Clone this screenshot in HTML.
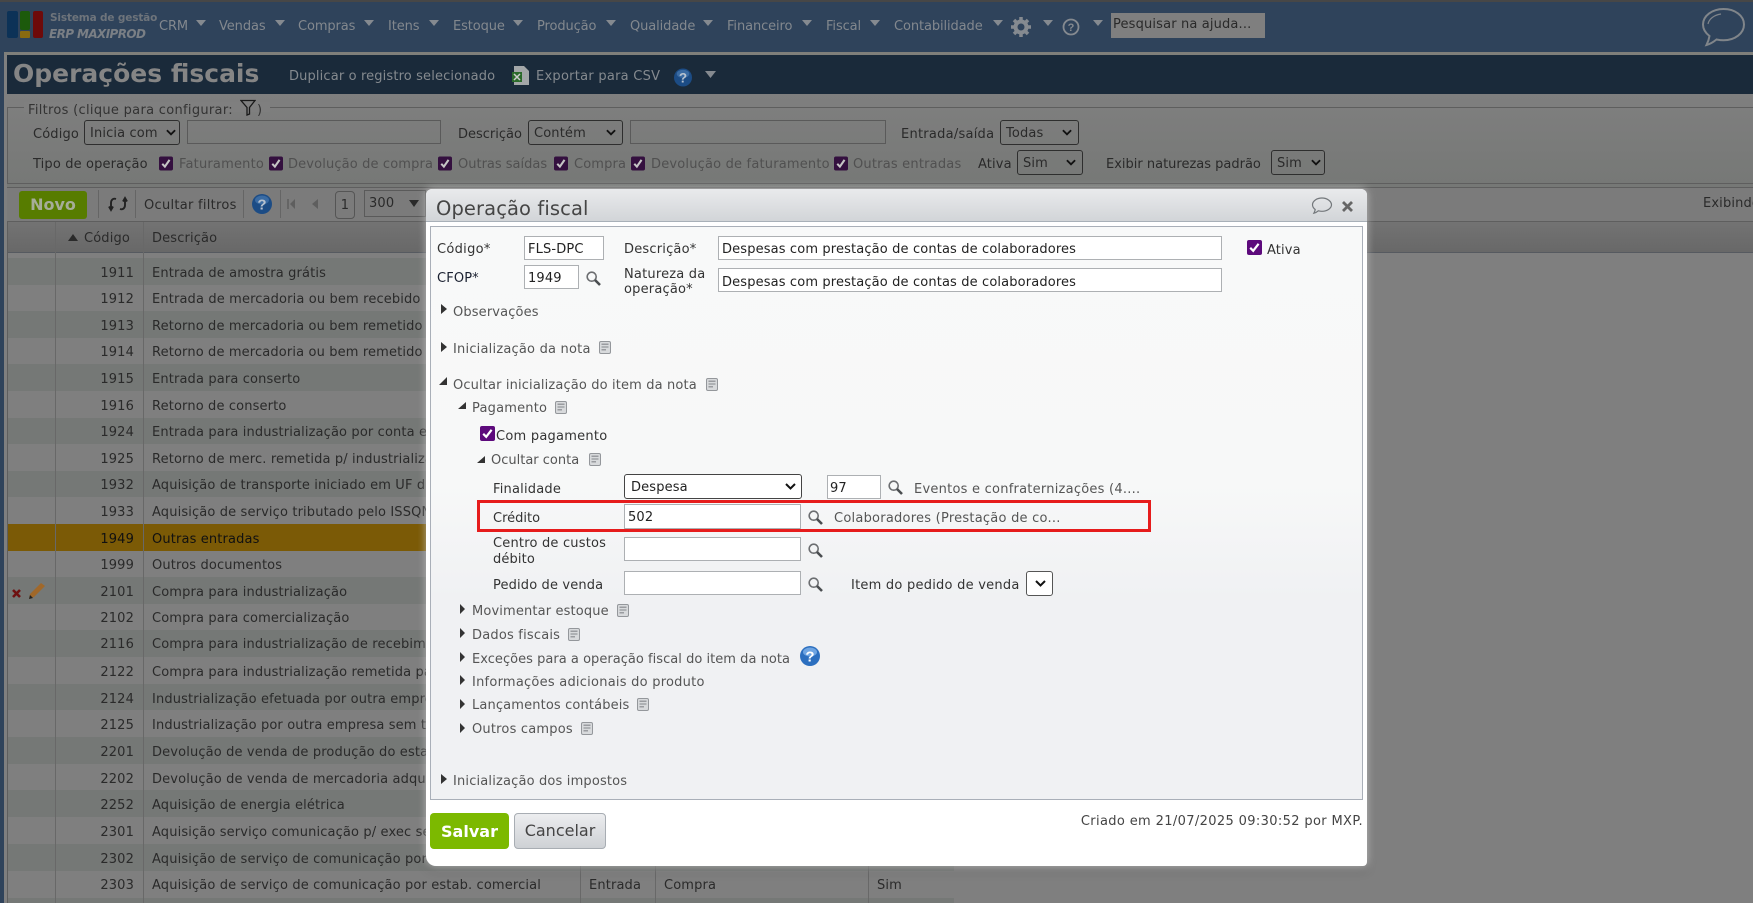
<!DOCTYPE html>
<html lang="pt-BR"><head><meta charset="utf-8"><title>Operações fiscais</title>
<style>
html,body{margin:0;padding:0;width:1753px;height:903px;overflow:hidden;background:#7f7f7f}
body{position:relative;font-family:"DejaVu Sans","Liberation Sans",sans-serif;font-size:13px;color:#2a2a2a;letter-spacing:.14px}
div,span,svg{position:absolute;box-sizing:border-box}
.t{white-space:nowrap;line-height:16px;margin-top:2px}
.m{color:#83888e;letter-spacing:-.1px;margin-top:1px}
.d{color:#555}
.g{color:#505050}
.r{height:27px;left:8px;width:946px}
.a{background:#757876}.b{background:#7f7f7f}
.n{width:54px;text-align:right;line-height:16px;margin-top:2px}
.x{line-height:16px;white-space:nowrap;margin-top:2px}
.sel{border:1px solid #2e2e2e;border-radius:3px;line-height:16px;padding:5px 0 0 5px;white-space:nowrap}
.inp{border:1px solid #5a5a5a}
.fi{background:#fff;border:1px solid #adb0b3;line-height:16px;padding:5px 0 0 3px;color:#222;white-space:nowrap}
</style></head><body>
<svg width="0" height="0" style="position:absolute">
<defs>
<symbol id="mag" viewBox="0 0 15 15"><circle cx="5.700" cy="5.700" r="4.500" fill="none" stroke="#6c6e71" stroke-width="1.600"/><path d="M9 9l5 5" stroke="#4a4d50" stroke-width="2.600"/></symbol>
<symbol id="note" viewBox="0 0 12 13"><rect x=".5" y=".5" width="11" height="12" rx="1.500" fill="#d8dadc" stroke="#94979b"/><path d="M2.500 3.200h7M2.500 6h7M2.500 8.800h4.500" stroke="#85888c" stroke-width="1.100"/></symbol>
<symbol id="cb" viewBox="0 0 15 15"><rect width="15" height="15" rx="2" fill="#5d0a7c"/><path d="M3.200 7.800l3 3 5.400-7" fill="none" stroke="#fff" stroke-width="2.200"/></symbol>
<symbol id="cbd" viewBox="0 0 15 15"><rect width="15" height="15" rx="2" fill="#34103f"/><path d="M3.500 7.800l2.800 3 5-7.200" fill="none" stroke="#c5c5c5" stroke-width="2.200"/></symbol>
<symbol id="chev" viewBox="0 0 11 7"><path d="M1 1l4.500 4.500L10 1" fill="none" stroke="#111" stroke-width="2"/></symbol>
<symbol id="help" viewBox="0 0 20 20"><circle cx="10" cy="10" r="10" fill="#2c6fbf"/><ellipse cx="10" cy="6" rx="7" ry="4.500" fill="#6fa5e2"/><text x="10" y="15.500" text-anchor="middle" font-family="Liberation Sans" font-weight="700" font-size="15" fill="#fff">?</text></symbol>
<symbol id="helpd" viewBox="0 0 20 20"><circle cx="10" cy="10" r="10" fill="#1c4c85"/><ellipse cx="10" cy="6" rx="7" ry="4.500" fill="#3a6ba3"/><text x="10" y="15.500" text-anchor="middle" font-family="Liberation Sans" font-weight="700" font-size="15" fill="#b7c2cf">?</text></symbol>
</defs></svg>

<!-- top bar -->
<div style="left:0;top:0;width:1753px;height:2px;background:#474747"></div>
<div style="left:0;top:2px;width:1753px;height:50px;background:#2f435b"></div>
<div style="left:0;top:52px;width:1753px;height:3px;background:#7f7f7a"></div>
<div style="left:0;top:52px;width:4px;height:851px;background:#2f435b"></div>
<div style="left:4px;top:55px;width:3px;height:848px;background:#7f7f7f"></div>

<div style="left:7px;top:11px;width:11px;height:27px;background:#0c3257;border-radius:2px"></div>
<div style="left:20px;top:11px;width:10px;height:19px;background:#1c5a0c;border-radius:2px"></div>
<div style="left:20px;top:31px;width:10px;height:7px;background:#8a6a10;border-radius:1px"></div>
<div style="left:33px;top:11px;width:10px;height:27px;background:#6e0a0a;border-radius:2px"></div>
<div class="t" style="left:50px;top:8px;font-size:10.500px;font-weight:700;color:#6e747b;letter-spacing:-.15px">Sistema de gestão</div>
<div class="t" style="left:49px;top:23px;margin-top:3px;font-size:12px;font-weight:700;font-style:italic;color:#7a7f85;letter-spacing:-.6px">ERP MAXIPROD</div>

<div class="t m" style="left:159px;top:18px">CRM</div>
<div class="t m" style="left:219px;top:18px">Vendas</div>
<div class="t m" style="left:298px;top:18px">Compras</div>
<div class="t m" style="left:388px;top:18px">Itens</div>
<div class="t m" style="left:453px;top:18px">Estoque</div>
<div class="t m" style="left:537px;top:18px">Produção</div>
<div class="t m" style="left:630px;top:18px">Qualidade</div>
<div class="t m" style="left:727px;top:18px">Financeiro</div>
<div class="t m" style="left:826px;top:18px">Fiscal</div>
<div class="t m" style="left:894px;top:18px">Contabilidade</div>
<svg style="left:0;top:0" width="1753" height="55"><g fill="#858a90">
<path d="M196 20h10l-5 6zM275 20h10l-5 6zM364 20h10l-5 6zM429 20h10l-5 6zM513 20h10l-5 6zM606 20h10l-5 6zM703 20h10l-5 6zM802 20h10l-5 6zM870 20h10l-5 6zM993 20h10l-5 6zM1043 20h10l-5 6zM1093 20h10l-5 6z"/></g>
<g stroke="#858a90" fill="none"><circle cx="1021" cy="27" r="5.500" stroke-width="4"/><path d="M1021 17v5M1021 32v5M1011 27h5M1026 27h5M1014 20l3.500 3.500M1024.500 30.500l3.500 3.500M1028 20l-3.500 3.500M1017.500 30.500l-3.500 3.500" stroke-width="3.500"/>
<circle cx="1071" cy="27" r="7.500" stroke-width="1.800"/></g>
<text x="1071" y="31" text-anchor="middle" font-family="Liberation Sans" font-size="11" font-weight="700" fill="#858a90">?</text>
<path d="M1723.500 9c-11.500 0-20.500 7-20.500 15.500 0 4.500 2.500 8.500 6.500 11.500-.5 3-1.500 6-3 9 4-1 7.500-3.500 10-5.500 2.500.5 4.500.8 7 .8 11.500 0 20.500-7 20.500-15.800S1735 9 1723.500 9z" fill="none" stroke="#80858a" stroke-width="2"/>
<path d="M1708 24c1-5 6-9 13-10" fill="none" stroke="#80858a" stroke-width="1.200"/></svg>
<div class="t" style="left:1111px;top:13px;margin-top:0;width:154px;height:25px;background:#7f7f7f;color:#2a2a2a;padding:4px 0 0 2px;font-size:13px;letter-spacing:.15px">Pesquisar na ajuda...</div>

<!-- header -->
<div style="left:7px;top:55px;width:1746px;height:39px;background:#1a2a3a"></div>
<div class="t" style="left:13px;top:60px;margin-top:0;font-size:25px;line-height:28px;font-weight:700;color:#858585;letter-spacing:0">Operações fiscais</div>
<div class="t" style="left:289px;top:68px;margin-top:1px;color:#858a8f">Duplicar o registro selecionado</div>
<svg style="left:511px;top:65px" width="20" height="21"><path d="M3 1h10l5 5v14H3z" fill="#a3a7a8"/><rect x="1" y="7" width="10" height="10" fill="#2b6a2b"/><path d="M3 9l6 6M9 9l-6 6" stroke="#ccc" stroke-width="1.500"/></svg>
<div class="t" style="left:536px;top:68px;margin-top:1px;color:#858a8f;letter-spacing:.26px">Exportar para CSV</div>
<svg style="left:674px;top:68px" width="18" height="19"><use href="#helpd"/></svg>
<svg style="left:705px;top:71px" width="12" height="8"><path d="M0 0h11l-5.500 7z" fill="#858a90"/></svg>

<!-- filters -->
<div style="left:7px;top:94px;width:1746px;height:93px;background:linear-gradient(#7f7f7f,#767876)"></div>
<div style="left:7px;top:107px;width:1746px;height:77px;border:1px solid #5e5e5e;border-right:0"></div>
<div style="left:24px;top:102px;height:10px;width:246px;background:#7f7f7f"></div>
<div class="t" style="left:28px;top:101px;color:#333;letter-spacing:.3px">Filtros (clique para configurar:</div>
<svg style="left:240px;top:99px" width="16" height="17"><path d="M1 1.500h14L9.500 8.500v6.500L7 16V8.500z" fill="none" stroke="#1a1a1a" stroke-width="1.300"/></svg>
<div class="t" style="left:257px;top:101px;color:#333">)</div>

<div class="t" style="left:33px;top:125px">Código</div>
<div class="sel" style="left:84px;top:120px;width:96px;height:25px">Inicia com<svg style="right:3px;top:8px" width="10" height="7"><use href="#chev"/></svg></div>
<div class="inp" style="left:187px;top:120px;width:254px;height:24px"></div>
<div class="t" style="left:458px;top:125px;letter-spacing:0">Descrição</div>
<div class="sel" style="left:528px;top:120px;width:95px;height:25px">Contém<svg style="right:6px;top:8px" width="10" height="7"><use href="#chev"/></svg></div>
<div class="inp" style="left:630px;top:120px;width:256px;height:24px"></div>
<div class="t" style="left:901px;top:125px;letter-spacing:.25px">Entrada/saída</div>
<div class="sel" style="left:1000px;top:120px;width:79px;height:25px">Todas<svg style="right:6px;top:8px" width="10" height="7"><use href="#chev"/></svg></div>

<div class="t" style="left:33px;top:155px">Tipo de operação</div>
<svg style="left:159px;top:156px" width="14" height="15"><use href="#cbd"/></svg><div class="t g" style="left:179px;top:155px;letter-spacing:.2px">Faturamento</div>
<svg style="left:269px;top:156px" width="14" height="15"><use href="#cbd"/></svg><div class="t g" style="left:288px;top:155px">Devolução de compra</div>
<svg style="left:438px;top:156px" width="14" height="15"><use href="#cbd"/></svg><div class="t g" style="left:458px;top:155px;letter-spacing:0">Outras saídas</div>
<svg style="left:554px;top:156px" width="14" height="15"><use href="#cbd"/></svg><div class="t g" style="left:574px;top:155px">Compra</div>
<svg style="left:631px;top:156px" width="14" height="15"><use href="#cbd"/></svg><div class="t g" style="left:651px;top:155px;letter-spacing:.19px">Devolução de faturamento</div>
<svg style="left:834px;top:156px" width="14" height="15"><use href="#cbd"/></svg><div class="t g" style="left:853px;top:155px;letter-spacing:.2px">Outras entradas</div>
<div class="t" style="left:978px;top:155px">Ativa</div>
<div class="sel" style="left:1017px;top:150px;width:66px;height:25px">Sim<svg style="right:6px;top:8px" width="10" height="7"><use href="#chev"/></svg></div>
<div class="t" style="left:1106px;top:155px;letter-spacing:0">Exibir naturezas padrão</div>
<div class="sel" style="left:1271px;top:150px;width:54px;height:25px">Sim<svg style="right:3px;top:8px" width="10" height="7"><use href="#chev"/></svg></div>

<!-- toolbar -->
<div style="left:7px;top:187px;width:1746px;height:35px;background:#7b7b7b;border-top:1px solid #5e5e5e;border-bottom:1px solid #5e5e5e"></div>
<div class="t" style="left:19px;top:190px;margin-top:1px;width:68px;height:28px;background:#577c00;border-radius:3px;color:#a6ad98;font-weight:700;font-size:16px;line-height:28px;text-align:center;letter-spacing:0">Novo</div>
<div style="left:98px;top:190px;width:1px;height:28px;background:#656565"></div>
<svg style="left:108px;top:195px" width="20" height="18"><path d="M8 4C5 3 3 5 3 8v7M1 11.500l2 3.500 2-3.500M12 14c3 1 5-1 5-4V3M15 6.500l2-3.500 2 3.500" fill="none" stroke="#222" stroke-width="1.900"/></svg>
<div style="left:135px;top:190px;width:1px;height:28px;background:#656565"></div>
<div class="t" style="left:144px;top:196px;letter-spacing:.28px">Ocultar filtros</div>
<div style="left:243px;top:190px;width:1px;height:28px;background:#656565"></div>
<svg style="left:252px;top:194px" width="20" height="20"><use href="#helpd"/></svg>
<div style="left:280px;top:190px;width:1px;height:28px;background:#656565"></div>
<svg style="left:287px;top:198px" width="34" height="12"><path d="M1 1v10" stroke="#5e5e5e" stroke-width="1.500"/><path d="M8 1L3 6l5 5zM31 1l-6 5 6 5z" fill="#5e5e5e"/></svg>
<div class="t" style="left:335px;top:190px;margin-top:1px;width:20px;height:28px;border:1px solid #555;border-radius:4px;text-align:center;line-height:27px">1</div>
<div class="t" style="left:364px;top:190px;margin-top:0;width:62px;height:27px;border:1px solid #5a5a5a;padding:5px 0 0 4px">300</div>
<svg style="left:409px;top:200px" width="11" height="8"><path d="M0 0h10L5 7z" fill="#2a2a2a"/></svg>
<div class="t" style="left:1703px;top:195px;margin-top:1px;width:50px;overflow:hidden">Exibindo</div>

<!-- table -->
<div style="left:7px;top:222px;width:1746px;height:31px;background:linear-gradient(#737373,#686868);border-bottom:1px solid #565a60"></div>
<svg style="left:68px;top:234px" width="11" height="8"><path d="M0 7h10L5 0z" fill="#2a2a2a"/></svg>
<div class="t" style="left:84px;top:229px">Código</div>
<div class="t" style="left:152px;top:229px">Descrição</div>

<div class="r a" style="top:258px;height:27px"><div class="n" style="left:72px;top:6px">1911</div><div class="x" style="left:144px;top:6px">Entrada de amostra grátis</div></div>
<div class="r b" style="top:285px;height:26px"><div class="n" style="left:72px;top:5px">1912</div><div class="x" style="left:144px;top:5px">Entrada de mercadoria ou bem recebido</div></div>
<div class="r a" style="top:311px;height:27px"><div class="n" style="left:72px;top:6px">1913</div><div class="x" style="left:144px;top:6px">Retorno de mercadoria ou bem remetido</div></div>
<div class="r b" style="top:338px;height:26px"><div class="n" style="left:72px;top:5px">1914</div><div class="x" style="left:144px;top:5px">Retorno de mercadoria ou bem remetido</div></div>
<div class="r a" style="top:364px;height:27px"><div class="n" style="left:72px;top:6px">1915</div><div class="x" style="left:144px;top:6px">Entrada para conserto</div></div>
<div class="r b" style="top:391px;height:27px"><div class="n" style="left:72px;top:6px">1916</div><div class="x" style="left:144px;top:6px">Retorno de conserto</div></div>
<div class="r a" style="top:418px;height:26px"><div class="n" style="left:72px;top:5px">1924</div><div class="x" style="left:144px;top:5px">Entrada para industrialização por conta e ordem</div></div>
<div class="r b" style="top:444px;height:27px"><div class="n" style="left:72px;top:6px">1925</div><div class="x" style="left:144px;top:6px">Retorno de merc. remetida p/ industrialização</div></div>
<div class="r a" style="top:471px;height:26px"><div class="n" style="left:72px;top:5px">1932</div><div class="x" style="left:144px;top:5px">Aquisição de transporte iniciado em UF diversa</div></div>
<div class="r b" style="top:497px;height:27px"><div class="n" style="left:72px;top:6px">1933</div><div class="x" style="left:144px;top:6px">Aquisição de serviço tributado pelo ISSQN</div></div>
<div class="r" style="top:524px;height:27px;background:#7b5a06;color:#111"><div class="n" style="left:72px;top:6px">1949</div><div class="x" style="left:144px;top:6px">Outras entradas</div></div>
<div class="r b" style="top:551px;height:26px"><div class="n" style="left:72px;top:5px">1999</div><div class="x" style="left:144px;top:5px">Outros documentos</div></div>
<div class="r a" style="top:577px;height:27px"><div class="n" style="left:72px;top:6px">2101</div><div class="x" style="left:144px;top:6px">Compra para industrialização</div></div>
<div class="r b" style="top:604px;height:26px"><div class="n" style="left:72px;top:5px">2102</div><div class="x" style="left:144px;top:5px">Compra para comercialização</div></div>
<div class="r a" style="top:630px;height:27px"><div class="n" style="left:72px;top:5px">2116</div><div class="x" style="left:144px;top:5px">Compra para industrialização de recebimento</div></div>
<div class="r b" style="top:657px;height:27px"><div class="n" style="left:72px;top:6px">2122</div><div class="x" style="left:144px;top:6px">Compra para industrialização remetida para</div></div>
<div class="r a" style="top:684px;height:26px"><div class="n" style="left:72px;top:6px">2124</div><div class="x" style="left:144px;top:6px">Industrialização efetuada por outra empresa</div></div>
<div class="r b" style="top:710px;height:27px"><div class="n" style="left:72px;top:6px">2125</div><div class="x" style="left:144px;top:6px">Industrialização por outra empresa sem trânsito</div></div>
<div class="r a" style="top:737px;height:27px"><div class="n" style="left:72px;top:6px">2201</div><div class="x" style="left:144px;top:6px">Devolução de venda de produção do estabelecimento</div></div>
<div class="r b" style="top:764px;height:26px"><div class="n" style="left:72px;top:6px">2202</div><div class="x" style="left:144px;top:6px">Devolução de venda de mercadoria adquirida</div></div>
<div class="r a" style="top:790px;height:27px"><div class="n" style="left:72px;top:6px">2252</div><div class="x" style="left:144px;top:6px">Aquisição de energia elétrica</div></div>
<div class="r b" style="top:817px;height:27px"><div class="n" style="left:72px;top:6px">2301</div><div class="x" style="left:144px;top:6px">Aquisição serviço comunicação p/ exec serviço</div></div>
<div class="r a" style="top:844px;height:27px"><div class="n" style="left:72px;top:6px">2302</div><div class="x" style="left:144px;top:6px">Aquisição de serviço de comunicação por estab.</div></div>
<div class="r b" style="top:871px;height:27px"><div class="n" style="left:72px;top:5px">2303</div><div class="x" style="left:144px;top:5px">Aquisição de serviço de comunicação por estab. comercial</div><div class="x" style="left:581px;top:5px">Entrada</div><div class="x" style="left:656px;top:5px">Compra</div><div class="x" style="left:869px;top:5px">Sim</div></div>
<div class="r a" style="top:898px;height:5px"></div>
<div style="left:7px;top:222px;width:1px;height:681px;background:#5e5e5e"></div>
<div style="left:55px;top:222px;width:1px;height:681px;background:#686868"></div>
<div style="left:143px;top:222px;width:1px;height:681px;background:#686868"></div>
<div style="left:580px;top:860px;width:1px;height:43px;background:#686868"></div>
<div style="left:655px;top:860px;width:1px;height:43px;background:#686868"></div>
<div style="left:868px;top:860px;width:1px;height:43px;background:#686868"></div>
<svg style="left:11px;top:581px" width="36" height="20"><path d="M2 9l7 7M9 9l-7 7" stroke="#6e1010" stroke-width="2.600"/><path d="M18 18l1-5L30 2l4 3-11 11z" fill="#a0682a"/><path d="M18 18l1-4 3 3z" fill="#222"/></svg>

<!-- dialog -->
<div style="left:426px;top:189px;width:941px;height:677px;background:#fff;border-radius:6px 6px 4px 10px;box-shadow:0 0 9px rgba(255,255,255,.55),0 5px 9px rgba(50,50,50,.25)">
  <div style="left:0;top:0;width:941px;height:33px;background:linear-gradient(#e9eaec,#d2d5d8);border-bottom:1px solid #a8b0b8;border-radius:6px 6px 0 0"></div>
  <div style="left:4px;top:37px;width:933px;height:574px;background:linear-gradient(#f8f9f9 0,#f7f8f8 45%,#f0f1f3 65%,#f0f1f3 100%);border:1px solid #a9afb8"></div>
</div>
<div class="t" style="left:436px;top:197px;margin-top:0;font-size:19.500px;line-height:24px;color:#454545;letter-spacing:.1px">Operação fiscal</div>
<svg style="left:1311px;top:196px" width="22" height="20"><path d="M11 2C5.800 2 1.500 5 1.500 8.800c0 2 1 3.500 2.700 4.700-.2 1.300-.6 2.500-1.300 3.700 1.700-.4 3.300-1.400 4.400-2.400 1.300.3 2.500.5 3.700.5 5.200 0 9.500-3 9.500-6.500S16.200 2 11 2z" fill="none" stroke="#73777b" stroke-width="1.200"/></svg>
<svg style="left:1342px;top:201px" width="11" height="11"><path d="M1 1l9 9M10 1l-9 9" stroke="#666" stroke-width="2.800"/></svg>

<div class="t" style="left:437px;top:240px;color:#333;letter-spacing:.3px">Código*</div>
<div class="fi" style="left:524px;top:236px;width:80px;height:24px">FLS-DPC</div>
<div class="t" style="left:624px;top:240px;color:#333;letter-spacing:.2px">Descrição*</div>
<div class="fi" style="left:718px;top:236px;width:504px;height:24px">Despesas com prestação de contas de colaboradores</div>
<svg style="left:1247px;top:240px" width="15" height="15"><use href="#cb"/></svg>
<div class="t" style="left:1267px;top:241px;color:#333">Ativa</div>

<div class="t" style="left:437px;top:269px;color:#1a2030">CFOP*</div>
<div class="fi" style="left:524px;top:265px;width:55px;height:24px">1949</div>
<svg style="left:586px;top:271px" width="15" height="15"><use href="#mag"/></svg>
<div class="t" style="left:624px;top:265px;color:#333;letter-spacing:.2px">Natureza da</div>
<div class="t" style="left:624px;top:280px;color:#333;letter-spacing:.2px">operação*</div>
<div class="fi" style="left:718px;top:268px;width:504px;height:24px;padding-top:6px">Despesas com prestação de contas de colaboradores</div>

<svg style="left:0;top:0" width="1753" height="903"><g fill="#333">
<path d="M441 304l6 5-6 5zM441 342l6 5-6 5zM441 774l6 5-6 5zM460 604l5 5-5 5zM460 628l5 5-5 5zM460 652l5 5-5 5zM460 675l5 5-5 5zM460 699l5 5-5 5zM460 723l5 5-5 5z"/>
<path d="M447 377v8h-8zM466 402v7h-8zM485 456v7h-8z"/></g></svg>

<div class="t d" style="left:453px;top:303px">Observações</div>
<div class="t d" style="left:453px;top:340px;letter-spacing:.21px">Inicialização da nota</div><svg style="left:599px;top:341px" width="12" height="13"><use href="#note"/></svg>
<div class="t d" style="left:453px;top:376px">Ocultar inicialização do item da nota</div><svg style="left:706px;top:378px" width="12" height="13"><use href="#note"/></svg>
<div class="t d" style="left:472px;top:399px;letter-spacing:.2px">Pagamento</div><svg style="left:555px;top:401px" width="12" height="13"><use href="#note"/></svg>
<svg style="left:480px;top:426px" width="15" height="15"><use href="#cb"/></svg>
<div class="t" style="left:496px;top:427px;color:#333;letter-spacing:.25px">Com pagamento</div>
<div class="t d" style="left:491px;top:451px;letter-spacing:0">Ocultar conta</div><svg style="left:589px;top:453px" width="12" height="13"><use href="#note"/></svg>

<div class="t" style="left:493px;top:480px;color:#333;letter-spacing:.2px">Finalidade</div>
<div class="sel" style="left:624px;top:474px;width:178px;height:25px;background:#fff;border-color:#444;color:#222;padding-left:6px">Despesa<svg style="right:5px;top:8px" width="11" height="7"><use href="#chev"/></svg></div>
<div class="fi" style="left:827px;top:475px;width:54px;height:24px;padding-left:2px">97</div>
<svg style="left:888px;top:480px" width="15" height="15"><use href="#mag"/></svg>
<div class="t d" style="left:914px;top:480px;letter-spacing:.24px">Eventos e confraternizações (4....</div>

<div class="t" style="left:493px;top:509px;color:#333;letter-spacing:0">Crédito</div>
<div class="fi" style="left:624px;top:504px;width:177px;height:25px">502</div>
<svg style="left:808px;top:510px" width="15" height="15"><use href="#mag"/></svg>
<div class="t d" style="left:834px;top:509px;letter-spacing:.24px">Colaboradores (Prestação de co...</div>
<div style="left:477px;top:500px;width:674px;height:32px;border:3px solid #e61c1c"></div>

<div class="t" style="left:493px;top:534px;color:#333;letter-spacing:.2px">Centro de custos</div>
<div class="t" style="left:493px;top:550px;color:#333">débito</div>
<div class="fi" style="left:624px;top:537px;width:177px;height:24px"></div>
<svg style="left:808px;top:543px" width="15" height="15"><use href="#mag"/></svg>

<div class="t" style="left:493px;top:576px;color:#333">Pedido de venda</div>
<div class="fi" style="left:624px;top:571px;width:177px;height:24px"></div>
<svg style="left:808px;top:577px" width="15" height="15"><use href="#mag"/></svg>
<div class="t" style="left:851px;top:576px;color:#333;letter-spacing:.24px">Item do pedido de venda</div>
<div class="sel" style="left:1026px;top:571px;width:27px;height:25px;background:#fff;border-color:#555"><svg style="left:8px;top:8px" width="11" height="7"><use href="#chev"/></svg></div>

<div class="t d" style="left:472px;top:602px">Movimentar estoque</div><svg style="left:617px;top:604px" width="12" height="13"><use href="#note"/></svg>
<div class="t d" style="left:472px;top:626px;letter-spacing:.2px">Dados fiscais</div><svg style="left:568px;top:628px" width="12" height="13"><use href="#note"/></svg>
<div class="t d" style="left:472px;top:650px;letter-spacing:.03px">Exceções para a operação fiscal do item da nota</div><svg style="left:800px;top:646px" width="20" height="20"><use href="#help"/></svg>
<div class="t d" style="left:472px;top:673px;letter-spacing:.24px">Informações adicionais do produto</div>
<div class="t d" style="left:472px;top:696px">Lançamentos contábeis</div><svg style="left:637px;top:698px" width="12" height="13"><use href="#note"/></svg>
<div class="t d" style="left:472px;top:720px;letter-spacing:.2px">Outros campos</div><svg style="left:581px;top:722px" width="12" height="13"><use href="#note"/></svg>
<div class="t d" style="left:453px;top:772px;letter-spacing:.17px">Inicialização dos impostos</div>

<div class="t" style="left:430px;top:813px;margin-top:0;width:79px;height:36px;background:#7cb900;border-radius:4px;color:#fff;font-weight:700;font-size:16px;line-height:37px;text-align:center;letter-spacing:0">Salvar</div>
<div class="t" style="left:514px;top:813px;margin-top:0;width:92px;height:36px;background:linear-gradient(#ecedef,#ced1d5);border:1px solid #a8adb3;border-radius:4px;color:#444;font-size:16px;line-height:33px;text-align:center;letter-spacing:0">Cancelar</div>
<div class="t" style="right:390px;top:814px;margin-top:0;color:#444;letter-spacing:.36px">Criado em 21/07/2025 09:30:52 por MXP.</div>
</body></html>
